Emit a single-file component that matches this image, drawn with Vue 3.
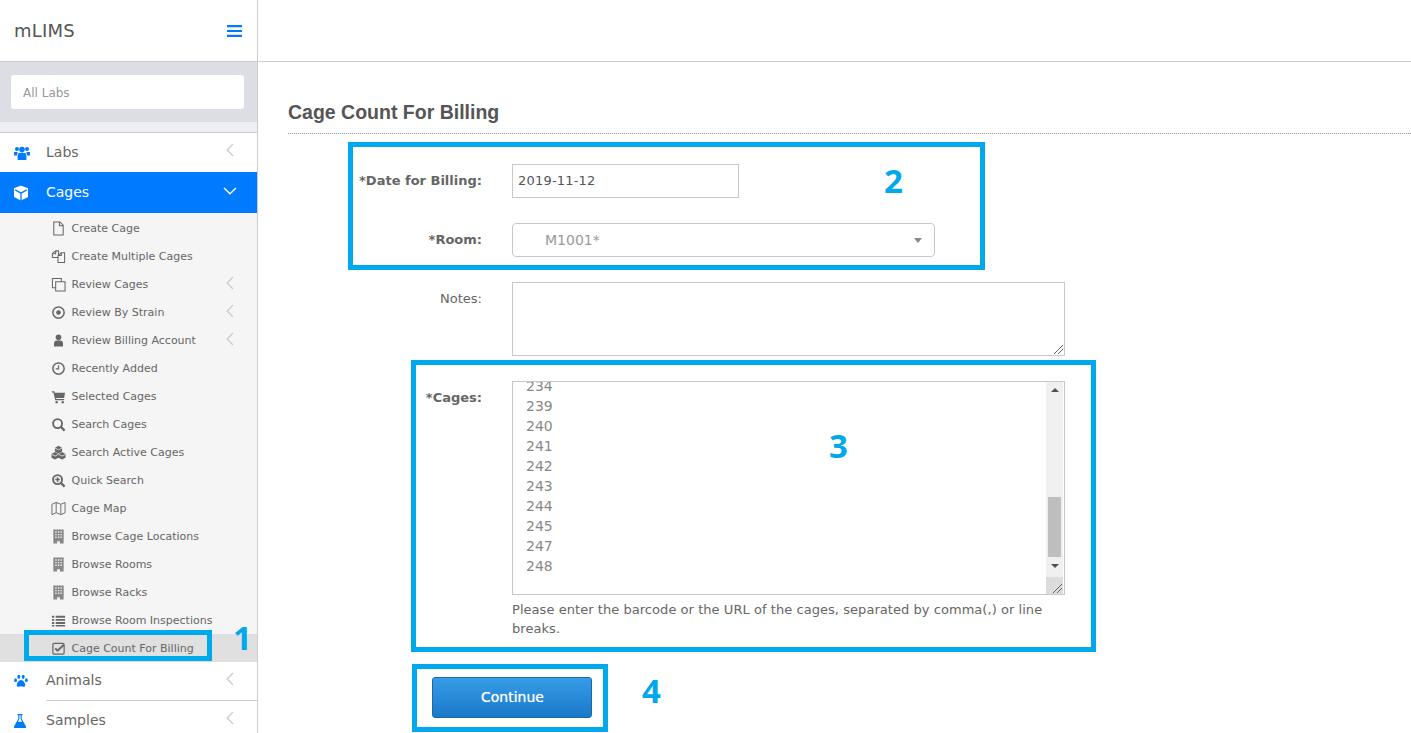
<script setup>
const subItems = [
  { icon: 'file', label: 'Create Cage' },
  { icon: 'files', label: 'Create Multiple Cages' },
  { icon: 'copy', label: 'Review Cages', arrow: true },
  { icon: 'dot', label: 'Review By Strain', arrow: true },
  { icon: 'user', label: 'Review Billing Account', arrow: true },
  { icon: 'clock', label: 'Recently Added' },
  { icon: 'cart', label: 'Selected Cages' },
  { icon: 'search', label: 'Search Cages' },
  { icon: 'cubes', label: 'Search Active Cages' },
  { icon: 'searchplus', label: 'Quick Search' },
  { icon: 'map', label: 'Cage Map' },
  { icon: 'building', label: 'Browse Cage Locations' },
  { icon: 'building', label: 'Browse Rooms' },
  { icon: 'building', label: 'Browse Racks' },
  { icon: 'list', label: 'Browse Room Inspections' },
  { icon: 'check', label: 'Cage Count For Billing', active: true },
]
const cages = [234, 239, 240, 241, 242, 243, 244, 245, 247, 248]
const notes = [
  { n: 1, cls: 'n1' },
  { n: 2, cls: 'n2' },
  { n: 3, cls: 'n3' },
  { n: 4, cls: 'n4' },
]
</script>

<template>
  <div class="app">
    <aside class="sidebar">
      <div class="brand">
        <span class="logo">mLIMS</span>
        <svg class="bars" viewBox="0 0 15 12" width="15" height="12"><path d="M0 0h15v2.2H0zM0 4.9h15v2.2H0zM0 9.8h15V12H0z" fill="#007bff"/></svg>
      </div>
      <div class="lab-band"><div class="lab-input">All Labs</div></div>
      <div class="lab-gap"></div>

      <div class="nav-main">
        <svg class="nav-icon" viewBox="0 0 16 14" width="16" height="14" fill="#007bff"><circle cx="3" cy="3" r="2"/><circle cx="13" cy="3" r="2"/><circle cx="8" cy="3.6" r="2.8"/><path d="M0 6h3.6L3 9.5H0zM16 6h-3.6l.6 3.5h3zM4.5 7h7l.9 3v4H3.6v-4z"/></svg>
        <span>Labs</span>
        <svg class="chev" viewBox="0 0 8 14" width="8" height="14"><path d="M7 1 1.2 7 7 13" fill="none" stroke="#ccc" stroke-width="1.3"/></svg>
      </div>
      <div class="nav-main open">
        <svg class="nav-icon" viewBox="0 0 14 15" width="14" height="15"><path d="M7 0 14 2.8v8.6L7 15 0 11.4V2.8z" fill="#fff"/><path d="M7 7.6 1.2 4.4M7 7.6l5.8-3.2M7 7.6V15" stroke="#007bff" stroke-width="1.3" fill="none"/></svg>
        <span>Cages</span>
        <svg class="chev-down" viewBox="0 0 14 8" width="14" height="8"><path d="M1 1l6 5.8L13 1" fill="none" stroke="#fff" stroke-width="1.4"/></svg>
      </div>

      <ul class="sub">
        <li v-for="item in subItems" :key="item.label" :class="{ active: item.active }">
          <span class="sub-icon">
            <svg viewBox="0 0 16 16" width="15" height="15" fill="#666">
              <path v-if="item.icon === 'file'" d="M3 1h6.500L13 4.500V15H3zM9 1.500V5h3.800" fill="none" stroke="#666" stroke-width="1.100"/>
              <g v-else-if="item.icon === 'files'" fill="none" stroke="#666" stroke-width="1.100"><path d="M1.500 5 5 2h3v7H1.500z"/><path d="M7.500 7 11 4h3.500v10.500h-7z" fill="#f5f5f5"/><path d="M5 2v3H1.500M11 4v3H7.500"/></g>
              <g v-else-if="item.icon === 'copy'" fill="none" stroke="#666" stroke-width="1.100"><path d="M1.500 1.500h9.500v10H1.500z"/><path d="M5 5h10v10H5z" fill="#f5f5f5"/></g>
              <g v-else-if="item.icon === 'dot'"><circle cx="8" cy="8" r="6" fill="none" stroke="#666" stroke-width="1.600"/><circle cx="8" cy="8" r="2.500"/></g>
              <g v-else-if="item.icon === 'user'"><circle cx="8" cy="4.500" r="3"/><path d="M3.200 14.500v-3.200c0-2 1.300-3.300 2.800-3.300h4c1.500 0 2.800 1.300 2.800 3.300v3.200z"/></g>
              <g v-else-if="item.icon === 'clock'"><circle cx="8" cy="8" r="6" fill="none" stroke="#666" stroke-width="1.600"/><path d="M8 4.500V8.500H5" fill="none" stroke="#666" stroke-width="1.300"/></g>
              <g v-else-if="item.icon === 'cart'"><path d="M1 2.500h2.600l.4 1.500H15l-1 5.500H5.500l.3 1.200H14v1.300H4.600L2.600 3.800H1z"/><circle cx="6" cy="14" r="1.300"/><circle cx="12.500" cy="14" r="1.300"/></g>
              <g v-else-if="item.icon === 'search'"><circle cx="7" cy="7" r="4.800" fill="none" stroke="#666" stroke-width="2"/><path d="m10.500 10.500 4 4" stroke="#666" stroke-width="2.400"/></g>
              <g v-else-if="item.icon === 'cubes'"><path d="M8 .8 11.800 3v4L8 9 4.200 7V3zM4.200 7.500 8 9.700v4L4.200 15.500.5 13.700v-4zM11.800 7.500l3.700 2.200v4l-3.700 1.800L8 13.700v-4z"/><path d="M4.200 3.200 8 5.200l3.800-2M.6 9.900l3.600 1.900 3.700-1.900M8.100 9.900l3.700 1.900 3.600-1.900" stroke="#f5f5f5" stroke-width=".8" fill="none"/></g>
              <g v-else-if="item.icon === 'searchplus'"><circle cx="7" cy="7" r="4.800" fill="none" stroke="#666" stroke-width="2"/><path d="m10.500 10.500 4 4" stroke="#666" stroke-width="2.400"/><path d="M4.500 6.200h5v1.600h-5zM6.200 4.500h1.600v5H6.200z"/></g>
              <path v-else-if="item.icon === 'map'" d="M1 3.500 5.500 1.500 10.500 3.500 15 1.500V12.500L10.500 14.500 5.500 12.500 1 14.500zM5.500 1.500v11M10.500 3.500v11" fill="none" stroke="#666" stroke-width="1"/>
              <g v-else-if="item.icon === 'building'"><path d="M2.500 0.500h11v15h-4v-2.500h-3V15.500h-4z" fill="#888"/><path d="M4.500 2.500h1.500V4H4.500zM7.300 2.500h1.500V4H7.300zM10 2.500h1.500V4H10zM4.500 5.200h1.500v1.500H4.500zM7.300 5.200h1.500v1.500H7.300zM10 5.200h1.500v1.500H10zM4.500 8h1.500v1.500H4.500zM7.300 8h1.500v1.500H7.300zM10 8h1.500v1.500H10z" fill="#eee"/></g>
              <path v-else-if="item.icon === 'list'" d="M1 3h2.500v2H1zM5 3h10v2H5zM1 6.300h2.500v2H1zM5 6.300h10v2H5zM1 9.600h2.500v2H1zM5 9.600h10v2H5zM1 12.900h2.500v1.600H1zM5 12.900h10v1.600H5z"/>
              <g v-else-if="item.icon === 'check'"><path d="M3.500 2.500h9a1.500 1.500 0 0 1 1.500 1.500v8.500a1.500 1.500 0 0 1-1.500 1.500h-9A1.500 1.500 0 0 1 2 12.500V4a1.500 1.500 0 0 1 1.500-1.500z" fill="none" stroke="#666" stroke-width="1.300"/><path d="m4.500 7.800 2.600 2.600 6.500-6.400" fill="none" stroke="#666" stroke-width="2"/></g>
            </svg>
          </span>
          <span class="sub-label">{{ item.label }}</span>
          <svg v-if="item.arrow" class="sub-chev" viewBox="0 0 8 14" width="8" height="14"><path d="M7 1 1.200 7 7 13" fill="none" stroke="#ccc" stroke-width="1.300"/></svg>
        </li>
      </ul>

      <div class="nav-main plain">
        <svg class="nav-icon" viewBox="0 0 14 13" width="14" height="13" fill="#007bff"><ellipse cx="4.800" cy="2.300" rx="1.500" ry="2.100"/><ellipse cx="9.200" cy="2.300" rx="1.500" ry="2.100"/><ellipse cx="1.600" cy="5.700" rx="1.400" ry="1.900"/><ellipse cx="12.400" cy="5.700" rx="1.400" ry="1.900"/><path d="M7 5.500c2 0 4.200 3 4.200 5.200 0 2-2 1.800-4.200 1.100-2.200.7-4.200.9-4.200-1.100C2.800 8.500 5 5.500 7 5.500z"/></svg>
        <span>Animals</span>
        <svg class="chev" viewBox="0 0 8 14" width="8" height="14"><path d="M7 1 1.200 7 7 13" fill="none" stroke="#ccc" stroke-width="1.300"/></svg>
      </div>
      <div class="divider"></div>
      <div class="nav-main plain last">
        <svg class="nav-icon" viewBox="0 0 12 14" width="12" height="14" fill="#007bff"><path d="M3.500 0h5v1.200h-.8v3.600L12 12.500c.3.800-.2 1.500-1 1.500H1c-.8 0-1.300-.7-1-1.500L4.300 4.800V1.200h-.8z"/><path d="M5.400 1.200v3.900L3.900 7.800h4.200L6.600 5.100V1.200z" fill="#fff"/></svg>
        <span>Samples</span>
        <svg class="chev" viewBox="0 0 8 14" width="8" height="14"><path d="M7 1 1.200 7 7 13" fill="none" stroke="#ccc" stroke-width="1.300"/></svg>
      </div>
    </aside>

    <main class="main">
      <header class="topbar"></header>
      <section class="content">
        <h1 class="title">Cage Count For Billing</h1>
        <form class="form" @submit.prevent>
          <label class="lbl bold">*Date for Billing:</label>
          <div class="date-input">2019-11-12</div>

          <label class="lbl bold">*Room:</label>
          <div class="select">
            <span>M1001*</span>
            <i class="caret"></i>
          </div>

          <label class="lbl">Notes:</label>
          <div class="notes"><i class="grip"></i></div>

          <label class="lbl bold">*Cages:</label>
          <div class="cages-col">
            <div class="cages-box">
              <div class="cage-lines">
                <div v-for="c in cages" :key="c" class="cage-line">{{ c }}</div>
              </div>
              <div class="scrollbar">
                <i class="arrow up"></i>
                <div class="track"><div class="thumb"></div></div>
                <i class="arrow down"></i>
                <div class="corner"><i class="grip"></i></div>
              </div>
            </div>
            <p class="help">Please enter the barcode or the URL of the cages, separated by comma(,) or line breaks.</p>
          </div>

          <div></div>
          <div class="actions"><button type="button" class="btn">Continue</button></div>
        </form>
      </section>
    </main>

    <div class="mark m1"></div>
    <div class="mark m2"></div>
    <div class="mark m3"></div>
    <div class="mark m4"></div>
    <span v-for="x in notes" :key="x.n" class="num" :class="x.cls">{{ x.n }}</span>
  </div>
</template>

<style>
html, body { margin: 0; overflow: hidden; background: #fff; }
</style>

<style scoped>
.app {
  position: relative;
  display: flex;
  width: 100%;
  height: 100vh;
  overflow: hidden;
  font-family: "DejaVu Sans", Verdana, sans-serif;
  color: #666;
}
.sidebar {
  flex: 0 0 257px;
  width: 257px;
  border-right: 1px solid #ccc;
  overflow: hidden;
  background: #fff;
}
.brand {
  height: 61px;
  border-bottom: 1px solid #ccc;
  display: flex;
  align-items: center;
  justify-content: space-between;
  padding: 0 15px 0 14px;
}
.logo { font-size: 18px; color: #555; letter-spacing: .2px; margin-top: -1px; }
.lab-band {
  height: 60px;
  background: #dddde6;
  padding: 13px 13px 0 11px;
  box-sizing: border-box;
}
.lab-input {
  height: 34px;
  line-height: 36px;
  background: #fff;
  border-radius: 3px;
  padding-left: 12px;
  font-size: 12px;
  color: #999;
}
.lab-gap { height: 10px; background: #eeeef4; border-bottom: 1px solid #ccc; }
.nav-main {
  height: 39px;
  display: flex;
  align-items: center;
  font-size: 14px;
  color: #666;
  position: relative;
}
.nav-main.open { height: 41px; background: #007bff; color: #fff; }
.nav-main.plain { height: 38px; }
.nav-main.last { height: 40px; }
.nav-icon {
  position: absolute;
  left: 14px;
  top: 50%;
  transform: translateY(-50%);
}
.nav-main span { margin-left: 46px; margin-bottom: 2px; }
.chev { position: absolute; left: 226px; top: 10px; }
.chev-down { position: absolute; left: 223px; top: 15px; }
.divider { height: 1px; margin-left: 46px; background: #ccc; }
.sub {
  list-style: none;
  margin: 0;
  padding: 1px 0 0;
  background: #f5f5f5;
}
.sub li {
  height: 28px;
  display: flex;
  align-items: center;
  position: relative;
  font-size: 11px;
  color: #666;
}
.sub li.active { background: #e0e0e0; }
.sub-icon {
  width: 15px;
  height: 15px;
  margin-left: 51px;
  display: block;
  line-height: 0;
}
.sub-label { margin-left: 5.5px; }
.sub-chev { position: absolute; left: 226px; top: 6px; }

.main { flex: 1; min-width: 0; }
.topbar { height: 61px; border-bottom: 1px solid #ccc; }
.content { padding-left: 30px; }
.title {
  margin: 0;
  height: 72px;
  box-sizing: border-box;
  border-bottom: 1px dotted #999;
  padding-top: 38px;
  font: bold 19.5px/24px "Liberation Sans", Arial, sans-serif;
  color: #555;
}
.form {
  display: grid;
  grid-template-columns: 194px 553px;
  column-gap: 30px;
  row-gap: 25px;
  padding-top: 30px;
}
.lbl {
  text-align: right;
  font-size: 13px;
  color: #666;
  line-height: 16px;
  padding-top: 9px;
}
.bold { font-weight: bold; }
.date-input {
  width: 227px;
  height: 34px;
  box-sizing: border-box;
  border: 1px solid #c8c8c8;
  font-size: 13px;
  line-height: 32px;
  padding-left: 5px;
  letter-spacing: .2px;
  color: #555;
}
.select {
  width: 423px;
  height: 34px;
  box-sizing: border-box;
  border: 1px solid #c8c8c8;
  border-radius: 4px;
  display: flex;
  align-items: center;
  justify-content: space-between;
  padding: 0 12px 0 32px;
  font-size: 14px;
  color: #999;
}
.caret {
  width: 0;
  height: 0;
  border-left: 4px solid transparent;
  border-right: 4px solid transparent;
  border-top: 5px solid #888;
}
.notes {
  height: 74px;
  box-sizing: border-box;
  border: 1px solid #c8c8c8;
  position: relative;
}
.grip {
  position: absolute;
  right: 1px;
  bottom: 1px;
  width: 9px;
  height: 9px;
  background: linear-gradient(135deg, transparent 0 46%, #666 46% 54%, transparent 54% 68%, #666 68% 76%, transparent 76%);
}
.cages-box {
  height: 214px;
  box-sizing: border-box;
  border: 1px solid #c8c8c8;
  display: flex;
  overflow: hidden;
}
.cage-lines {
  flex: 1;
  margin-top: -6px;
  padding-left: 13px;
  font-size: 14px;
  line-height: 20px;
  color: #888;
}
.cage-line { height: 20px; }
.scrollbar {
  position: relative;
  width: 17px;
  background: #f0f0f0;
  margin-right: 1px;
}
.arrow {
  position: absolute;
  left: 5px;
  width: 0;
  height: 0;
  border-left: 4px solid transparent;
  border-right: 4px solid transparent;
}
.arrow.up { top: 6px; border-bottom: 4px solid #505050; }
.arrow.down { top: 182px; border-top: 4px solid #505050; }
.thumb {
  position: absolute;
  left: 2px;
  top: 115px;
  width: 13px;
  height: 60px;
  background: #bebebe;
}
.corner {
  position: absolute;
  left: 0;
  right: 0;
  bottom: 0;
  height: 17px;
  background: #dcdcdc;
}
.help {
  margin: 5px 0 0;
  font-size: 13px;
  line-height: 19px;
  letter-spacing: .05px;
  color: #666;
}
.actions { margin-top: 14px; margin-left: -80px; }
.btn {
  display: block;
  width: 160px;
  height: 41px;
  border: 1px solid #1a6aab;
  border-radius: 3px;
  background: linear-gradient(#369de8, #1a78c8);
  color: #fff;
  font: 14px "DejaVu Sans", Verdana, sans-serif;
  text-shadow: 0 0 1px rgba(255, 255, 255, .7);
  padding: 0 0 2px 1px;
}

.mark {
  position: absolute;
  box-sizing: border-box;
  border: 5px solid #00a8ec;
  pointer-events: none;
}
.m1 { left: 24px; top: 630px; width: 188px; height: 31px; }
.m2 { left: 348px; top: 142px; width: 637px; height: 128px; }
.m3 { left: 411px; top: 360px; width: 685px; height: 292px; }
.m4 { left: 412px; top: 664px; width: 196px; height: 68px; }
.num {
  position: absolute;
  font: bold 33px/40px "Open Sans", "Noto Sans", sans-serif;
  color: #00a8ec;
}
.n1 { left: 233px; top: 618px; }
.n2 { left: 884px; top: 161px; }
.n3 { left: 829px; top: 426px; }
.n4 { left: 642px; top: 671px; }
</style>
